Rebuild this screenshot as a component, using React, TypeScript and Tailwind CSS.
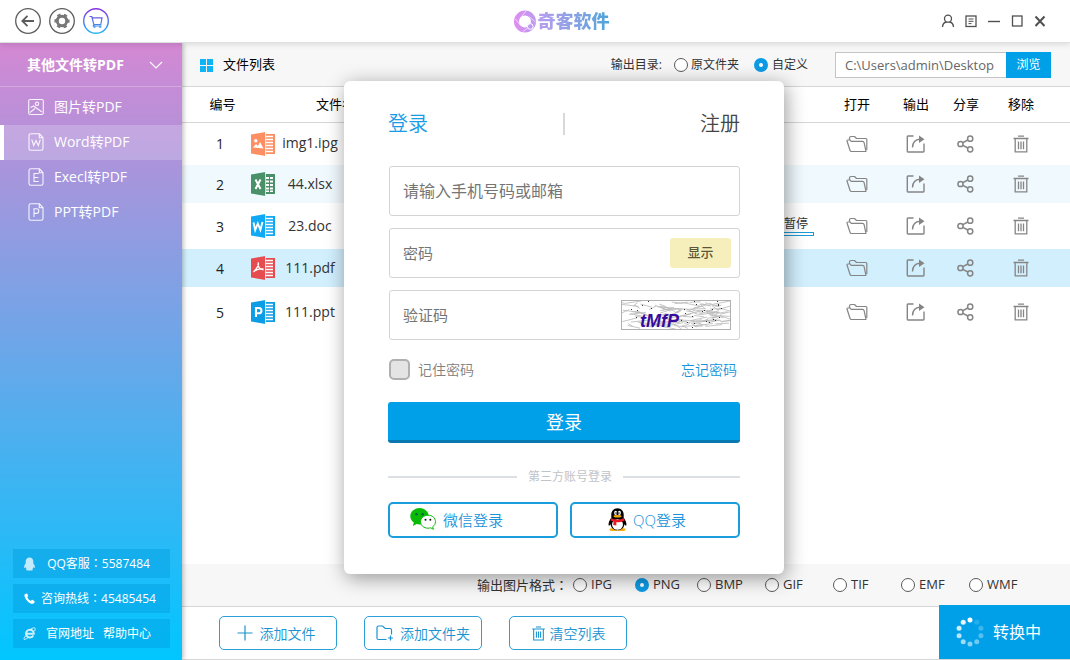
import React, { useState } from "react";

type Kind = "img" | "xls" | "doc" | "pdf" | "ppt";

const FILES: { id: number; name: string; kind: Kind; row: string; running?: boolean }[] = [
  { id: 1, name: "img1.ipg", kind: "img", row: "h-[43px]" },
  { id: 2, name: "44.xlsx", kind: "xls", row: "h-[38px] bg-[#f0f9fe]" },
  { id: 3, name: "23.doc", kind: "doc", row: "h-[46px]", running: true },
  { id: 4, name: "111.pdf", kind: "pdf", row: "h-[38px] bg-[#d2effd]" },
  { id: 5, name: "111.ppt", kind: "ppt", row: "h-[50px]" },
];

const FORMATS = [
  { name: "IPG", width: "w-[62px]" },
  { name: "PNG", width: "w-[62px]" },
  { name: "BMP", width: "w-[68px]" },
  { name: "GIF", width: "w-[68px]" },
  { name: "TIF", width: "w-[68px]" },
  { name: "EMF", width: "w-[68px]" },
  { name: "WMF", width: "w-[68px]" },
];

const KIND_COLOR: Record<Kind, string> = {
  img: "#fd8f63",
  xls: "#4a9068",
  doc: "#0fa9f5",
  pdf: "#e54b4f",
  ppt: "#0c9de6",
};

function FileIcon({ kind }: { kind: Kind }) {
  const c = KIND_COLOR[kind];
  return (
    <svg width="24" height="24" viewBox="0 0 24 24" className="shrink-0" aria-hidden="true">
      <path d="M13 2h11v20H13z" fill={c} />
      {kind === "xls" ? (
        <path
          d="M15 5h3v2h-3zM19 5h3v2h-3zM15 8.500h3v2h-3zM19 8.500h3v2h-3zM15 12h3v2h-3zM19 12h3v2h-3zM15 15.500h3v2h-3zM19 15.500h3v2h-3zM15 18.500h3v1.500h-3zM19 18.500h3v1.500h-3z"
          fill="#fff"
        />
      ) : (
        <path
          d="M14 4.500h8M14 7.500h8M14 10.500h8M14 13.500h8M14 16.500h8M14 19.500h8"
          stroke="#fff"
          strokeWidth="1.3"
        />
      )}
      <path d="M0 2.500 14.500 0v24L0 21.500z" fill={c} />
      <path d="M14.500 0v24" stroke="#fff" strokeWidth=".7" />
      {kind === "img" && (
        <g fill="#fff">
          <circle cx="4.800" cy="8.800" r="1.700" />
          <path d="M2 15.500l3-3.500 2 2 2-4 3.500 6.500z" />
        </g>
      )}
      {kind === "xls" && <path d="M4.500 7.500l5 9.500M9.500 7.500l-5 9.500" stroke="#fff" strokeWidth="2" />}
      {kind === "doc" && (
        <path d="M2.500 8.500l1.700 7.500 2.600-6.500 2.600 6.500L11.500 8" stroke="#fff" strokeWidth="1.900" fill="none" />
      )}
      {kind === "pdf" && (
        <path
          d="M6.800 6.500c1.600 1.200-.2 5.500-4.300 9.500M7 8c.2 3.500 2.500 5.500 5.500 5.800M3.500 15c2.500-1.700 5.500-2.500 9-2"
          stroke="#fff"
          strokeWidth="1.400"
          fill="none"
        />
      )}
      {kind === "ppt" && (
        <path d="M5 17V8h2.800a2.500 2.500 0 0 1 0 5.300H5" stroke="#fff" strokeWidth="2.100" fill="none" />
      )}
    </svg>
  );
}

function OpenIcon() {
  return (
    <svg width="22" height="18" viewBox="0 0 22 18" fill="none" stroke="#858585" strokeWidth="1.200" strokeLinejoin="round">
      <path d="M3.500 5V2.800Q3.500 1.500 5 1.500h3.500l2 2h9.300q1 0 1 1V15" />
      <path d="M1.800 5h2.400l.8 1.300h11.500q1.300 0 1.600 1.300l1.900 8.900H5.500q-1.200 0-1.500-1.200L1 6q-.1-1 .8-1z" />
    </svg>
  );
}

function OutputIcon() {
  return (
    <svg width="20" height="20" viewBox="0 0 20 20" fill="none" stroke="#858585" strokeWidth="1.400">
      <path d="M7.500 2H2Q1.300 2 1.300 2.700v14.600q0 .7.700.7h15.300q.7 0 .7-.7V9.500" />
      <path d="M6.500 13.500C6.700 8.500 9.500 5.500 14 5.300" />
      <path d="M13 1.500l5.500 3.800L13 9z" fill="#858585" stroke="none" />
    </svg>
  );
}

function ShareIcon() {
  return (
    <svg width="18" height="18" viewBox="0 0 18 18" fill="none" stroke="#858585" strokeWidth="1.500">
      <circle cx="3.500" cy="9" r="2.600" />
      <circle cx="13.200" cy="3.700" r="2.600" />
      <circle cx="13.200" cy="14.300" r="2.600" />
      <path d="M5.900 7.700l4.900-2.700M5.900 10.300l4.900 2.700" />
    </svg>
  );
}

function TrashIcon({ color = "#858585", size = 18 }: { color?: string; size?: number }) {
  return (
    <svg width={size} height={size} viewBox="0 0 18 18" fill="none" stroke={color} strokeWidth="1.300">
      <path d="M1.500 3.500h15M6 1.200h6M3.200 3.500v13.300h11.600V3.500M6.500 6.500v7.700M9 6.500v7.700M11.500 6.500v7.700" />
    </svg>
  );
}

function DocLetter({ letter }: { letter: "W" | "E" | "P" }) {
  return (
    <svg width="16" height="18" viewBox="0 0 16 18" fill="none" stroke="#fff" strokeOpacity=".9" strokeWidth="1.100">
      <path d="M3 .8h8.500l3.500 4v10.700q0 1.700-1.700 1.700H2.700Q1 17.200 1 15.500V2.500Q1 .8 3 .8zM11.300 1v3.800h3.500" />
      {letter === "W" && <path d="M3.700 6.500l2 6L8 7.500l2.300 5 2-6" />}
      {letter === "E" && <path d="M10.800 5.500H6v8h4.800M6 9.500h4.300" />}
      {letter === "P" && <path d="M6 14V5.800h2.500a2.300 2.300 0 0 1 0 4.600H6" />}
    </svg>
  );
}

function PhotoIcon() {
  return (
    <svg width="16" height="18" viewBox="0 0 16 18" fill="none" stroke="#fff" strokeOpacity=".9" strokeWidth="1.100">
      <rect x=".7" y="1.500" width="14.600" height="15" rx="1.500" />
      <circle cx="9" cy="5.800" r="1.700" />
      <path d="M2.500 9.500l3-1.500 8.500 6M2 14.500l5-4" />
    </svg>
  );
}

function Spinner() {
  const dots = Array.from({ length: 10 }, (_, i) => {
    const a = (-90 - i * 36) * (Math.PI / 180);
    return { x: 14 + 11.500 * Math.cos(a), y: 15 + 12 * Math.sin(a), o: Math.max(0.15, 1 - i * 0.095) };
  });
  return (
    <svg width="28" height="30" viewBox="0 0 28 30" fill="#fff" aria-hidden="true">
      {dots.map((d, i) => (
        <circle key={i} cx={d.x} cy={d.y} r="2.500" fillOpacity={d.o} />
      ))}
    </svg>
  );
}

function CaptchaNoise() {
  let seed = 11;
  const rnd = () => {
    seed = (seed * 16807) % 2147483647;
    return seed / 2147483647;
  };
  const lines = Array.from({ length: 130 }, () => {
    const x = rnd() * 100;
    const y = 2 + rnd() * 25;
    const dx = 4 + rnd() * 14;
    return `M${x.toFixed(1)} ${y.toFixed(1)}L${Math.min(109, x + dx).toFixed(1)} ${Math.max(1, Math.min(29, y + rnd() * 9 - 4)).toFixed(1)}`;
  }).join("");
  const dots = Array.from({ length: 34 }, () => ({ x: Math.floor(rnd() * 108), y: Math.floor(rnd() * 28) }));
  return (
    <svg width="110" height="30" viewBox="0 0 110 30" aria-hidden="true">
      <path d={lines} stroke="#b8b8b8" strokeWidth=".8" fill="none" />
      {dots.map((d, i) => (
        <rect key={i} x={d.x} y={d.y} width="1" height="1" fill="#333" />
      ))}
      <rect x=".5" y=".5" width="109" height="29" fill="none" stroke="#b0b0b0" />
    </svg>
  );
}

function WeChatIcon() {
  return (
    <svg width="26" height="24" viewBox="0 0 26 24" aria-hidden="true">
      <path d="M9.500 0C4.500 0 .3 3.600.3 8.300c0 2.600 1.400 4.900 3.500 6.300L2.900 18l3.700-1.900c1 .3 2 .4 3 .4 5 0 9.200-3.700 9.200-8.200S14.500 0 9.500 0z" fill="#09bb07" />
      <circle cx="6.500" cy="6.200" r="1.200" fill="#064" />
      <circle cx="12.600" cy="6.200" r="1.200" fill="#064" />
      <path d="M18 7.200c-4.200 0-7.500 2.900-7.500 6.500s3.300 6.500 7.500 6.500c.9 0 1.800-.1 2.600-.4l2.800 1.500-.7-2.600c1.700-1.200 2.800-3 2.800-5 0-3.600-3.300-6.500-7.500-6.500z" fill="#fff" stroke="#09bb07" />
      <circle cx="15.500" cy="11.800" r="1" fill="#111" />
      <circle cx="20.300" cy="11.800" r="1" fill="#111" />
    </svg>
  );
}

function PenguinIcon() {
  return (
    <svg width="19" height="24" viewBox="0 0 19 24" aria-hidden="true">
      <ellipse cx="5.500" cy="21.500" rx="4" ry="1.500" fill="#faab07" />
      <ellipse cx="13.500" cy="21.500" rx="4" ry="1.500" fill="#faab07" />
      <path d="M9.500.2c-4 0-6.200 3-6.200 6.500v3C1.500 11.900.3 14.700.6 17.200c.2 1 1.200.2 2-1 .3 3.500 3 6 6.900 6s6.600-2.500 6.900-6c.8 1.200 1.800 2 2 1 .3-2.500-.9-5.300-2.700-7.500V6.700c0-3.500-2.200-6.500-6.200-6.500z" fill="#000" />
      <ellipse cx="9.500" cy="16.500" rx="5.500" ry="5.200" fill="#fff" />
      <ellipse cx="7.600" cy="4.900" rx="1.500" ry="2.100" fill="#fff" />
      <ellipse cx="11.400" cy="4.900" rx="1.500" ry="2.100" fill="#fff" />
      <circle cx="8.100" cy="5.100" r=".8" />
      <circle cx="10.900" cy="5.100" r=".8" />
      <ellipse cx="9.500" cy="8.300" rx="4" ry="1.300" fill="#faab07" />
      <path d="M3 9.900c4 2.300 9 2.300 13 0l.6 2.600c-2.600 1.500-5.500 2-8.300 1.800v3.200l-3-.5.2-3.500-3-1z" fill="#eb1923" />
    </svg>
  );
}

/* Full-width colon centred in its box, as Traditional Chinese fonts set it. */
function Colon() {
  return <span className="font-['Noto_Sans_CJK_TC',sans-serif]">：</span>;
}

function Radio({ name, checked, onChange }: { name: string; checked: boolean; onChange: () => void }) {
  return (
    <input
      type="radio"
      name={name}
      checked={checked}
      onChange={onChange}
      className="size-[14px] shrink-0 appearance-none rounded-full border border-[#5a5a5a] bg-white checked:border-[5px] checked:border-[#0d9be4]"
    />
  );
}

function TitleBar() {
  return (
    <header className="relative z-10 flex h-[43px] items-center border-b border-[#e0e0e0] bg-white shadow-[0_2px_5px_rgba(0,0,0,0.1)]">
      <div className="flex w-[48%] gap-2 pl-[15px]">
        <button aria-label="返回">
          <svg width="26" height="26" viewBox="0 0 26 26" fill="none" stroke="#5c5c5c">
            <circle cx="13" cy="13" r="12.300" strokeWidth="1.300" />
            <path d="M19 13H7.500M12.500 7.800L7.300 13l5.200 5.200" strokeWidth="1.800" />
          </svg>
        </button>
        <button aria-label="设置">
          <svg width="26" height="26" viewBox="0 0 26 26" fill="none">
            <circle cx="13" cy="13" r="12.300" stroke="#5c5c5c" strokeWidth="1.300" />
            <circle cx="13" cy="13" r="4.700" stroke="#777" strokeWidth="3" />
            <circle cx="13" cy="13" r="6.600" stroke="#777" strokeWidth="2" strokeDasharray="3.450 3.460" strokeDashoffset="1.700" />
          </svg>
        </button>
        <button aria-label="购物车">
          <svg width="26" height="26" viewBox="0 0 26 26" fill="none" stroke="url(#cart)">
            <defs>
              <linearGradient id="cart" x1="0" y1="0" x2="0" y2="26" gradientUnits="userSpaceOnUse">
                <stop offset="0" stopColor="#8a2be2" />
                <stop offset="1" stopColor="#20b8f8" />
              </linearGradient>
            </defs>
            <circle cx="13" cy="13" r="12.300" strokeWidth="1.400" />
            <path d="M6.500 8.500h2.300l2 8h7l1.200-6.700H9.200M10.800 16.500l-.5 1.500h8" strokeWidth="1.200" />
            <circle cx="11.500" cy="18.800" r=".8" />
            <circle cx="17.200" cy="18.800" r=".8" />
          </svg>
        </button>
      </div>
      <div className="flex items-center gap-px">
        <svg width="23" height="23" viewBox="0 0 23 23" fill="none" aria-hidden="true">
          <defs>
            <linearGradient id="ring" x1="0" y1="0" x2="23" y2="0" gradientUnits="userSpaceOnUse">
              <stop offset="0" stopColor="#e08df0" />
              <stop offset="1" stopColor="#bb9af0" />
            </linearGradient>
          </defs>
          <circle cx="11" cy="11.500" r="8.500" stroke="url(#ring)" strokeWidth="5" />
          <path d="M6 8.500L12 1M15.500 7l6 5M6.500 15.500L1.500 9M15 17l-6 4.500" stroke="#fff" strokeWidth=".6" />
          <circle cx="16.300" cy="16.500" r="2.800" fill="#bb9af0" stroke="#fff" />
        </svg>
        <span className="bg-linear-to-r from-[#b79cf0] to-[#47a5d9] bg-clip-text text-[18px] leading-6 font-black text-transparent">
          奇客软件
        </span>
      </div>
      <div className="ml-auto flex pr-[19px] text-[#505050]">
        <button aria-label="用户" className="flex w-[23px] justify-center">
          <svg width="14" height="14" viewBox="0 0 14 14" fill="none" stroke="currentColor" strokeWidth="1.300">
            <circle cx="7" cy="4.700" r="3.500" />
            <path d="M1.500 13c.2-3 1.700-4.700 4-5M12.500 13c-.2-3-1.700-4.700-4-5" />
          </svg>
        </button>
        <button aria-label="菜单" className="flex w-[23px] justify-center">
          <svg width="14" height="14" viewBox="0 0 14 14" fill="none" stroke="currentColor" strokeWidth="1.300">
            <rect x="2" y="2" width="10" height="10.500" />
            <path d="M4.500 5h5M4.500 7.300h5M4.500 9.600h3" strokeWidth="1" />
          </svg>
        </button>
        <button aria-label="最小化" className="flex w-[23px] justify-center">
          <svg width="14" height="14" viewBox="0 0 14 14" fill="none" stroke="currentColor" strokeWidth="1.400">
            <path d="M1 7.500h12" />
          </svg>
        </button>
        <button aria-label="最大化" className="flex w-[23px] justify-center">
          <svg width="14" height="14" viewBox="0 0 14 14" fill="none" stroke="currentColor" strokeWidth="1.300">
            <rect x="2.500" y="2" width="9.500" height="10" />
          </svg>
        </button>
        <button aria-label="关闭" className="flex w-[23px] justify-center">
          <svg width="14" height="14" viewBox="0 0 14 14" fill="none" stroke="currentColor" strokeWidth="2">
            <path d="M2.500 2.500l9 9.500M11.500 2.500l-9 9.500" />
          </svg>
        </button>
      </div>
    </header>
  );
}

function Sidebar() {
  const items = [
    { label: "图片转PDF", icon: <PhotoIcon /> },
    { label: "Word转PDF", icon: <DocLetter letter="W" />, active: true },
    { label: "Execl转PDF", icon: <DocLetter letter="E" /> },
    { label: "PPT转PDF", icon: <DocLetter letter="P" /> },
  ];
  const contact = "flex h-[29px] items-center bg-[#0098dc]/40 pr-[9px] pl-[10px]";
  return (
    <aside className="relative flex w-[182px] shrink-0 flex-col bg-linear-to-b/srgb from-[#d488d3] to-[#00c6ff] text-white shadow-[1px_0_5px_rgba(0,0,0,0.3)]">
      <button className="flex h-11 items-center justify-between border-b border-white/25 pr-[19px] pl-[27px] text-[14px] font-bold">
        其他文件转PDF
        <svg width="14" height="8" viewBox="0 0 14 8" fill="none" stroke="#fff" strokeWidth="1.100" aria-hidden="true">
          <path d="M1 1l6 6 6-6" />
        </svg>
      </button>
      <nav className="flex flex-col pt-[3px] text-[14px]">
        {items.map((it) => (
          <a
            key={it.label}
            href="#"
            className={
              it.active
                ? "flex h-[35px] items-center gap-[10px] border-l-4 border-white bg-white/20 pb-[2px] pl-6"
                : "flex h-[35px] items-center gap-[10px] border-l-4 border-transparent pb-[2px] pl-6"
            }
          >
            {it.icon}
            {it.label}
          </a>
        ))}
      </nav>
      <div className="mt-auto flex flex-col gap-[6px] pr-3 pb-3 pl-[13px] text-[12px]">
        <div className={contact}>
          <svg width="13" height="14" viewBox="0 0 13 14" fill="#fff" fillOpacity=".75" aria-hidden="true">
            <path d="M6.500.5C4 .5 2.700 2.300 2.700 4.500v1.700C1.700 7.600.8 9.500 1.200 10.800c.3.500.9-.2 1.300-.8.200.9.600 1.500 1.200 2-.7.300-1 1.500.8 1.500h4c1.800 0 1.500-1.200.8-1.500.6-.5 1-1.100 1.200-2 .4.600 1 1.300 1.300.8.400-1.300-.5-3.200-1.500-4.600V4.500C10.300 2.300 9 .5 6.500.5z" />
          </svg>
          <span className="flex-1 text-center">
            QQ客服
            <Colon />
            5587484
          </span>
        </div>
        <div className={contact}>
          <svg width="13" height="13" viewBox="0 0 13 13" fill="#fff" aria-hidden="true">
            <path d="M3.600 1.500L1.800 2.300C.8 3.500 2 6.500 4.300 8.900s5 3.500 6.400 2.600l1-1.400c.2-.4.100-.7-.2-.9L9.700 8c-.4-.2-.7-.2-1 .1l-.8.800C6.300 8.300 4.900 6.800 4.300 5.300l.6-.7c.3-.3.300-.6.200-.9L4.300 1.900c-.1-.4-.4-.5-.7-.4z" />
          </svg>
          <span className="flex-1 text-center">
            咨询热线
            <Colon />
            45485454
          </span>
        </div>
        <div className={contact}>
          <svg width="13" height="13" viewBox="0 0 13 13" fill="none" stroke="#fff" strokeOpacity=".8" aria-hidden="true">
            <path d="M10.300 8.500A3.900 3.900 0 1 1 10.800 6.800H4" strokeWidth="2" />
            <path d="M2.500 9C.5 11.500.3 13 2.200 12.300c1-.3 2-1 2.800-1.700M7.500 2.300C10 .7 12 .3 12.200 1.500c.1.700-.2 1.600-.7 2.500" strokeWidth="1" />
          </svg>
          <span className="flex flex-1 justify-center gap-[9px]">
            <a href="#">官网地址</a>
            <a href="#">帮助中心</a>
          </span>
        </div>
      </div>
    </aside>
  );
}

function FileTable() {
  return (
    <table className="w-full table-fixed border-collapse">
      <colgroup>
        <col className="w-[69px]" />
        <col className="w-[140px]" />
        <col />
        <col className="w-[68px]" />
        <col className="w-[50px]" />
        <col className="w-[50px]" />
        <col className="w-[60px]" />
        <col className="w-[19px]" />
      </colgroup>
      <thead>
        <tr className="h-[35px] border-b border-[#d6d6d6] text-[13px] text-black">
          <th className="pl-3 font-normal">编号</th>
          <th className="pl-[65px] text-left font-normal">文件名</th>
          <th />
          <th className="font-normal">打开</th>
          <th className="font-normal">输出</th>
          <th className="font-normal">分享</th>
          <th className="font-normal">移除</th>
          <th />
        </tr>
      </thead>
      <tbody>
        {FILES.map((f) => (
          <tr key={f.id} className={f.row}>
            <td className="pl-[7px] text-center text-[14px] text-[#222]">{f.id}</td>
            <td>
              <div className="flex items-center">
                <FileIcon kind={f.kind} />
                <span className="w-[70px] pb-[2px] text-center text-[14px] text-[#333]">{f.name}</span>
              </div>
            </td>
            <td className="pr-[9px]">
              {f.running && (
                <div className="flex flex-col items-end">
                  <button className="pr-[6px] text-[12px] leading-4 text-[#333]">暂停</button>
                  <span className="h-1 w-[120px] border border-[#1c9bd8] bg-white" />
                </div>
              )}
            </td>
            <td>
              <button aria-label="打开" className="mx-auto block">
                <OpenIcon />
              </button>
            </td>
            <td>
              <button aria-label="输出" className="mx-auto block">
                <OutputIcon />
              </button>
            </td>
            <td>
              <button aria-label="分享" className="mx-auto block">
                <ShareIcon />
              </button>
            </td>
            <td>
              <button aria-label="移除" className="mx-auto block">
                <TrashIcon />
              </button>
            </td>
            <td />
          </tr>
        ))}
      </tbody>
    </table>
  );
}

function LoginDialog() {
  const [visible, setVisible] = useState(false);
  const field = "flex h-[50px] items-center rounded-[3px] border border-[#d4d4d4] bg-white pr-2";
  const input = "h-full min-w-0 flex-1 bg-transparent pl-[13px] outline-none placeholder:text-[#757575] placeholder:opacity-100";
  return (
    <div className="absolute inset-0 z-20 flex items-center justify-center pb-[5px] pl-[58px]">
      <form
        role="dialog"
        onSubmit={(e) => e.preventDefault()}
        className="w-[440px] rounded-[6px] bg-white px-11 pt-7 pb-9 shadow-[2px_4px_20px_rgba(0,0,0,0.4)]"
      >
        <div className="flex h-[30px] items-center justify-between text-[20px] font-[350]">
          <button type="button" className="text-[#1a9be6]">
            登录
          </button>
          <span className="h-[22px] w-[2px] bg-[#d8d8d8]" />
          <button type="button" className="text-[#444]">
            注册
          </button>
        </div>

        <div className="mt-[27px] ml-px flex flex-col gap-3">
          <div className={field}>
            <input aria-label="手机号码或邮箱" placeholder="请输入手机号码或邮箱" className={`${input} text-[16px]`} />
          </div>
          <div className={field}>
            <input
              aria-label="密码"
              type={visible ? "text" : "password"}
              placeholder="密码"
              className={`${input} text-[15px]`}
            />
            <button
              type="button"
              onClick={() => setVisible(!visible)}
              className="h-[30px] w-[61px] rounded-[3px] bg-[#f7efbb] text-[13px] font-medium text-[#5a5637]"
            >
              显示
            </button>
          </div>
          <div className={field}>
            <input aria-label="验证码" placeholder="验证码" className={`${input} text-[15px]`} />
            <div className="relative">
              <CaptchaNoise />
              <span className="absolute top-[11px] left-[19px] font-['Liberation_Sans'] text-[18px] leading-5 font-bold text-[#3a0a9c] italic">
                tMfP
              </span>
            </div>
          </div>
        </div>

        <div className="mt-[19px] flex h-[21px] items-center justify-between pr-[3px] text-[14px] font-[350]">
          <label className="flex items-center gap-2 text-[#808080]">
            <input
              type="checkbox"
              className="ml-px size-[21px] appearance-none rounded-[5px] border-2 border-[#b0b0b0] bg-[#e4e4e4] checked:bg-[#00a0e9]"
            />
            记住密码
          </label>
          <a href="#" className="text-[#1a93da]">
            忘记密码
          </a>
        </div>

        <button
          type="submit"
          className="mt-[22px] h-[41px] w-full rounded-[3px] border-b-[3px] border-[#0a78b0] bg-[#00a0e9] pt-[2px] text-[18px] text-white"
        >
          登录
        </button>

        <div className="mt-[25px] flex h-[18px] items-center text-[12px] text-[#bfc3c8]">
          <span className="h-[2px] w-[129px] bg-[#dce0e4]" />
          <span className="px-[11px]">第三方账号登录</span>
          <span className="h-[2px] flex-1 bg-[#dce0e4]" />
        </div>

        <div className="mt-4 grid grid-cols-2 gap-3 text-[15px] font-[350] text-[#1a93da]">
          <button type="button" className="flex h-9 items-center gap-[7px] rounded-[5px] border-2 border-[#1a9ddc] pl-5">
            <WeChatIcon />
            微信登录
          </button>
          <button type="button" className="flex h-9 items-center gap-[6px] rounded-[5px] border-2 border-[#1a9ddc] pl-9">
            <PenguinIcon />
            QQ登录
          </button>
        </div>
      </form>
    </div>
  );
}

export default function App() {
  const [dir, setDir] = useState("custom");
  const [format, setFormat] = useState("PNG");
  const action =
    "flex h-[34px] w-[118px] items-center justify-center rounded-[5px] border border-[#2a9fd8] text-[14px] font-[350] text-[#1a93cf]";
  return (
    <div className="relative flex min-h-screen flex-col bg-white font-['Open_Sans','Noto_Sans_CJK_SC',sans-serif] text-[#333]">
      <TitleBar />
      <div className="flex flex-1">
        <Sidebar />
        <main className="flex min-w-0 flex-1 flex-col">
          <section className="flex h-11 items-center border-b border-[#d6d6d6] bg-[#f7f7f7] pt-px pr-[19px] pl-[18px] text-[12px]">
            <svg width="13" height="13" viewBox="0 0 13 13" fill="#0fb4f7" aria-hidden="true">
              <path d="M0 0h6v6H0zM7 0h6v6H7zM0 7h6v6H0zM7 7h6v6H7z" />
            </svg>
            <h1 className="ml-[10px] text-[13px] text-black">文件列表</h1>
            <span className="mr-3 ml-auto">输出目录:</span>
            <label className="flex items-center gap-[3px]">
              <Radio name="dir" checked={dir === "source"} onChange={() => setDir("source")} />
              原文件夹
            </label>
            <label className="ml-[15px] flex items-center gap-1">
              <Radio name="dir" checked={dir === "custom"} onChange={() => setDir("custom")} />
              自定义
            </label>
            <input
              aria-label="输出目录"
              defaultValue="C:\Users\admin\Desktop"
              className="ml-[27px] h-[26px] w-[171px] border border-r-0 border-[#c4c4c4] bg-white pl-[9px] text-[13px] text-[#666] outline-none"
            />
            <button className="h-[26px] w-[45px] bg-[#00a0e9] text-white">浏览</button>
          </section>

          <section className="flex-1">
            <FileTable />
          </section>

          <section className="flex h-[43px] items-center justify-end border-b border-[#d6d6d6] bg-[#f7f7f7] pr-[33px] text-[13px]">
            <span className="mr-[5px]">
              输出图片格式
              <Colon />
            </span>
            {FORMATS.map((f) => (
              <label key={f.name} className={`${f.width} flex items-center gap-1`}>
                <Radio name="format" checked={format === f.name} onChange={() => setFormat(f.name)} />
                {f.name}
              </label>
            ))}
          </section>

          <footer className="flex h-[53px] items-center gap-[27px] border-b border-[#d6d6d6] pl-[37px]">
            <button className={`${action} gap-[7px] pr-1`}>
              <svg width="16" height="16" viewBox="0 0 16 16" stroke="currentColor" strokeWidth="1.200">
                <path d="M8 .5v15M.5 8h15" />
              </svg>
              添加文件
            </button>
            <button className={`${action} gap-[6px]`}>
              <svg width="18" height="16" viewBox="0 0 18 16" fill="none" stroke="currentColor" strokeWidth="1.200">
                <path d="M10.500 14.500H2.500Q1 14.500 1 13V2.500Q1 1 2.500 1h4l2.700 2.500h5Q15.500 3.500 15.500 5v4.500M14.500 10.500v5M12 13h5" />
              </svg>
              添加文件夹
            </button>
            <button className={`${action} gap-1`}>
              <TrashIcon color="currentColor" size={15} />
              清空列表
            </button>
            <button className="ml-auto flex h-[54px] w-[131px] items-center gap-[9px] self-end bg-[#00a0e9] pl-[17px] text-[16px] text-white">
              <Spinner />
              转换中
            </button>
          </footer>
        </main>
      </div>
      <LoginDialog />
    </div>
  );
}
